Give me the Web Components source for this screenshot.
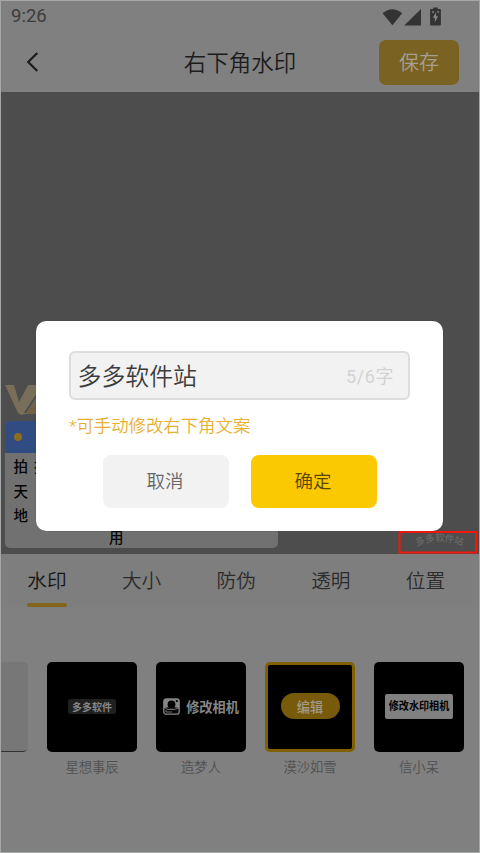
<!DOCTYPE html>
<html lang="zh-CN">
<head>
<meta charset="utf-8">
<title>右下角水印</title>
<style>
html,body{margin:0;padding:0}
body{width:480px;height:853px;overflow:hidden;font-family:Roboto,"Noto Sans CJK SC",sans-serif;font-weight:350}
</style>
</head>
<body>
<watermark-app></watermark-app>
<script>
function define(name, html){
  const t=document.createElement('template');
  t.innerHTML='<style>*{box-sizing:border-box}:host{box-sizing:border-box}</style>'+html;
  customElements.define(name,class extends HTMLElement{
    constructor(){super();this.attachShadow({mode:'open'}).appendChild(t.content.cloneNode(true));}
  });
}

define('status-bar',`
<style>
:host{display:flex;height:31px;padding:0 37px 0 10px;align-items:center;justify-content:space-between;font:400 18.500px/31px Roboto,sans-serif;color:#3c3c3c}
svg{display:block}
</style>
<span>9:26</span>
<svg width="60" height="20" viewBox="0 0 60 20" fill="#333">
<path d="M.6 6.2Q10.300-1.800 20.200 6.200L10.400 18.300Z"/>
<path d="M22.200 18.500L39 2V18.500Z"/>
<path d="M51.200.5h4.600v1.500h2.200q.9 0 .9.900v14.700q0 .9-.9.900h-9q-.9 0-.9-.9V2.900q0-.9.900-.9h2.200z"/>
<path fill="#858585" d="M54.100 5l-3.300 5.800h2v4.400l3.300-5.900h-2z"/>
<path fill="#808080" d="M50.300 4h1.500v2h-1.500zM55.400 4h1.400v2h-1.400z"/>
</svg>`);

define('title-bar',`
<style>
:host{display:grid;grid-template-columns:80px 1fr 80px;align-items:center;height:60px;padding:0 20px 0 24px}
h1{margin:0;font-size:22.500px;line-height:30px;font-weight:350;color:#1c1c1c;text-align:center;padding:2px 4px 0 0}
button{justify-self:end;width:80px;height:45px;border:0;border-radius:7px;background:#7a6222;color:#a6a093;font:350 20px/45px Roboto,"Noto Sans CJK SC",sans-serif;padding:1px 0 0}
svg{display:block}
</style>
<svg width="16" height="22" viewBox="0 0 16 22" fill="none" stroke="#1c1c1c" stroke-width="2.200"><path d="M12.300 2L3.200 11L12.300 20"/></svg>
<h1><slot></slot></h1>
<button>保存</button>`);

define('photo-canvas',`
<style>
:host{display:block;height:462px;background:#4d4d4d;position:relative;overflow:hidden}
.vip{position:absolute;left:4px;top:292px}
.card{position:absolute;left:4px;top:329px;width:273px;height:127px;border-radius:5px;background:#717171;overflow:hidden;font-weight:500;font-size:14.500px;line-height:24.500px;color:#050505}
.head{height:32px;background:#314c82;display:flex;align-items:center;padding-left:9px}
.head i{width:8px;height:8px;border-radius:50%;background:#8c6d20}
.rows{padding:3px 0 0 8.500px;white-space:pre;word-spacing:2.500px}
.rows div{height:24.500px}
.last{position:absolute;left:104px;top:106px}
.mark{position:absolute;left:397px;top:439px}
</style>
<svg class="vip" width="50" height="32" viewBox="0 0 50 32"><path fill="#786e59" d="M0 1h9l5 17L23 1h27v29H19q-3 2-6-1Z"/><path d="M20 29L38.500 1" stroke="#4d4d4d" stroke-width="2"/><path fill="#716044" d="M21.500 30L40 2V30Z"/></svg>
<div class="card"><div class="head"><i></i></div><div class="rows"><div>拍 摄</div><div>天</div><div>地</div></div><span class="last">用</span></div>
<svg class="mark" width="80" height="23" viewBox="0 0 80 23">
<g font-family="Noto Sans CJK SC,sans-serif" font-size="9.500" font-weight="500" fill="#696969" text-anchor="middle">
<text transform="translate(23 13.500) rotate(-18)">多</text><text transform="translate(32.500 11) rotate(-10)">多</text><text transform="translate(42 10)">软</text><text transform="translate(51 11) rotate(10)">件</text><text transform="translate(60 13) rotate(16)">站</text></g>
<rect x="1.500" y="1" width="76.500" height="20.500" fill="none" stroke="#f3170b" stroke-width="2"/>
</svg>`);

define('tab-item',`
<style>
:host{display:flex;flex-direction:column;width:40px;height:53px;align-items:center;justify-content:space-between;font-size:19.700px;line-height:56px;color:#2c2c2c;white-space:nowrap}
span{height:49px}
i{display:block;width:40px;height:4px;border-radius:2px}
:host([active]){color:#141414}
:host([active]) i{background:#83641b}
</style><span><slot></slot></span><i></i>`);

define('tab-row',`
<style>:host{display:flex;justify-content:space-between;padding:0 33.500px 0 26px;height:53px;background:#7e7e7e}</style><slot></slot>`);

define('style-card',`
<style>
:host{display:flex;flex-direction:column;align-items:center;width:90px;flex:none}
.box{width:90px;height:90px;border-radius:5px;background:#000;display:flex;align-items:center;justify-content:center;overflow:hidden;white-space:nowrap}
:host([selected]) .box{border:3px solid #806000}
:host([blank]) .box{background:#777;border:1px solid #777;border-bottom-color:#333}
label{font-size:13.300px;line-height:20px;margin-top:6.500px;color:#505050}
</style>
<div class="box"><slot></slot></div><label><slot name="label"></slot></label>`);

define('style-badge',`
<style>
:host{display:flex;align-items:center;justify-content:center;font-weight:700;position:relative;top:-.5px}
:host([kind=tag]){width:48px;height:15px;background:#202020;border-radius:3px;color:#858585;font-size:10px}
:host([kind=camera]){gap:6px;color:#858585;font-size:13.200px;padding:0}
:host([kind=pill]){width:59px;height:26px;border-radius:13px;background:#775a0a;color:#a39b85;font-size:13.200px;font-weight:500}
:host([kind=plate]){width:68px;height:25px;border-radius:2px;background:#808080;color:#000;font-size:10.100px}
:host([kind=plate]) span{display:block;transform:translateY(-1px) scaleY(1.100)}
svg{display:none}
:host([kind=camera]) svg{display:block}
</style>
<svg width="17" height="17" viewBox="0 0 17 17"><rect x=".8" y=".8" width="15.400" height="15.400" rx="2.500" fill="#080808" stroke="#858585" stroke-width="1.300"/><path fill="#858585" d="M1 1h15v9l-4.500-.7Q8 12 5.200 9.300L1 10Z"/><circle cx="8.500" cy="6.500" r="3.900" fill="#000"/><circle cx="13.800" cy="3.100" r="1.100" fill="#000"/><path d="M1 9.500L5 11.500h6l5-1.500" stroke="#858585" fill="none" stroke-width=".8"/><path d="M3 12v2h6" fill="none" stroke="#858585" stroke-width=".8"/></svg><span><slot></slot></span>`);

define('style-list',`
<style>:host{display:flex;gap:19px;width:478px;overflow:hidden;margin-top:54.500px}::slotted(:first-child){margin-left:-63px}</style><slot></slot>`);

define('text-dialog',`
<style>
:host{position:absolute;left:36px;top:321px;width:407px;height:209.500px;border-radius:10px;background:#fff;padding:30px 33px 0;display:block;box-shadow:0 0 1px #333}
.field{height:49px;border:2px solid #ddd;border-radius:6px;background:#f2f2f2;display:flex;align-items:center;justify-content:space-between;padding:3px 14px 0 6.500px;color:#3c3c3c;font-size:23.900px;line-height:42px}
.field .count{font-size:18px;font-weight:400;color:#d2d2d2;letter-spacing:.6px}
p{margin:12.500px 0 0;font-size:17.400px;line-height:27px;color:#e8b030}
.actions{display:flex;gap:22px;justify-content:center;margin-top:15.500px}
button{width:126px;height:53px;border:0;border-radius:8px;font:350 18.500px/53px Roboto,"Noto Sans CJK SC",sans-serif;padding:1px 1px 0 0;background:#f2f2f2;color:#666}
.ok{background:#fbc902;color:#584700}
</style>
<div class="field"><span>多多软件站</span><span class="count">5/6字</span></div>
<p>*可手动修改右下角文案</p>
<div class="actions"><button>取消</button><button class="ok">确定</button></div>`);

define('watermark-app',`
<style>:host{display:block;position:relative;width:480px;height:853px;background:#808080;border:1px solid #a6a8a7}
text-dialog{margin:-1px 0 0 -1px}</style>
<status-bar></status-bar>
<title-bar>右下角水印</title-bar>
<photo-canvas></photo-canvas>
<tab-row><tab-item active>水印</tab-item><tab-item>大小</tab-item><tab-item>防伪</tab-item><tab-item>透明</tab-item><tab-item>位置</tab-item></tab-row>
<style-list>
<style-card blank></style-card>
<style-card><style-badge kind="tag">多多软件</style-badge><span slot="label">星想事辰</span></style-card>
<style-card><style-badge kind="camera">修改相机</style-badge><span slot="label">造梦人</span></style-card>
<style-card selected><style-badge kind="pill">编辑</style-badge><span slot="label">漠沙如雪</span></style-card>
<style-card><style-badge kind="plate">修改水印相机</style-badge><span slot="label">信小呆</span></style-card>
</style-list>
<text-dialog></text-dialog>`);
</script>
</body>
</html>
